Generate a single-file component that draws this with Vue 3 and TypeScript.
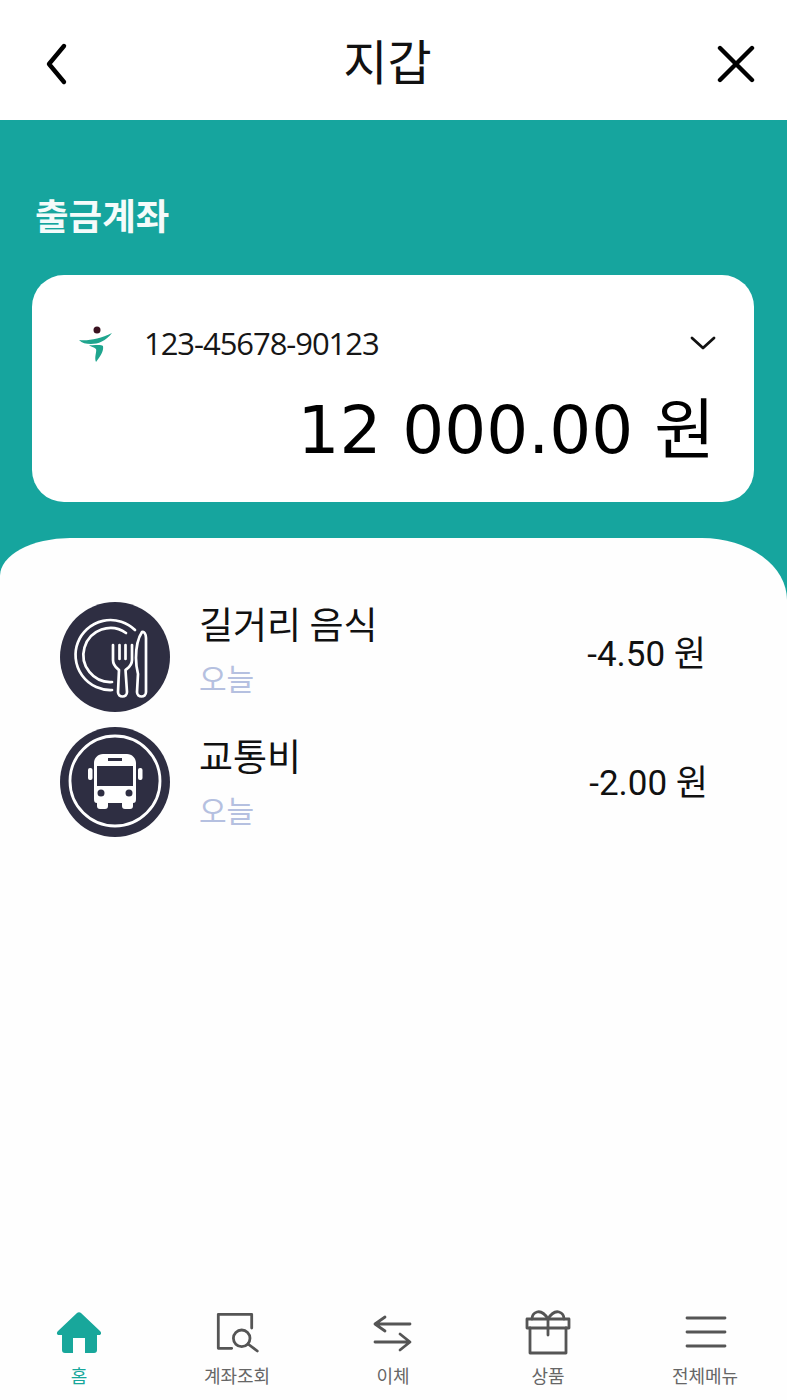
<script setup lang="ts">
interface Payment {
  name: string
  when: string
  amount: string
  icon: 'food' | 'bus'
  textTop: number
  amountTop: number
  amountRight: number
}

// text column drifts a few px from the icons in the design, so it's per row
const payments: Payment[] = [
  { name: '길거리 음식', when: '오늘', amount: '-4.50 원', icon: 'food', textTop: -3, amountTop: -14, amountRight: -2 },
  { name: '교통비', when: '오늘', amount: '-2.00 원', icon: 'bus', textTop: 4, amountTop: -6, amountRight: -4 },
]

const tabs = [
  { key: 'home', label: '홈' },
  { key: 'search', label: '계좌조회' },
  { key: 'transfer', label: '이체' },
  { key: 'gift', label: '상품' },
  { key: 'menu', label: '전체메뉴' },
]
</script>

<template>
  <div class="wallet">
    <header class="topbar">
      <svg class="topbar__icon" width="28" height="44" viewBox="0 0 28 44" fill="none" stroke="#000" stroke-width="4.4" stroke-linecap="round" stroke-linejoin="round">
        <path d="M22 4 L7 22 L22 40" />
      </svg>
      <h1 class="topbar__title">지갑</h1>
      <svg class="topbar__icon" width="38" height="38" viewBox="0 0 38 38" fill="none" stroke="#000" stroke-width="4.4" stroke-linecap="round">
        <path d="M3 3 L35 35 M35 3 L3 35" />
      </svg>
    </header>

    <section class="account">
      <h2 class="account__label">출금계좌</h2>
      <div class="card">
        <div class="card__row">
          <svg class="card__logo" width="36" height="40" viewBox="0 0 36 40">
            <circle cx="21" cy="7" r="3.500" fill="#3a1220" />
            <path d="M3 17 C12 18 24 16 36 10 C30 18 22 21 15 21 C10 21 6 20 3 17 Z" fill="#1fa58e" />
            <path d="M13 22 C18 23 24 21 27 23 C28 28 24 34 20 39 C18 34 21 29 20 26 C18 24 15 24 13 22 Z" fill="#1fa58e" />
          </svg>
          <span class="card__number">123-45678-90123</span>
          <svg class="card__chevron" width="26" height="16" viewBox="0 0 26 16" fill="none" stroke="#111" stroke-width="2.800" stroke-linecap="round" stroke-linejoin="round">
            <path d="M2 3 L13 13 L24 3" />
          </svg>
        </div>
        <div class="card__balance">12 000.00 원</div>
      </div>
    </section>

    <main class="sheet">
      <div v-for="p in payments" :key="p.name" class="payment">
        <svg v-if="p.icon === 'food'" class="payment__icon" width="110" height="110" viewBox="0 0 110 110">
          <circle cx="55" cy="55" r="55" fill="#2e2e42" />
          <g fill="none" stroke="#fff" stroke-width="2.700" stroke-linecap="round" stroke-linejoin="round">
            <path d="M75 28 A 35 35 0 1 0 52 88" />
            <path d="M66 31 A 27 27 0 1 0 52 80" />
            <path d="M53 43 V58 C53 64 57 66 59 68 L58 90 C58 96 67 96 67 90 L65.500 68 C68 66 72 64 72 58 V43 M59.500 43 V57 M65.500 43 V57" />
            <path d="M82 30 C78 36 76 44 76 56 C76 64 77 68 78 72 L77 90 C77 96 86 96 86 90 V36 C86 32 84 29 82 30 Z" />
          </g>
        </svg>
        <svg v-else class="payment__icon" width="110" height="110" viewBox="0 0 110 110">
          <circle cx="55" cy="55" r="55" fill="#2e2e42" />
          <circle cx="55" cy="54" r="45" fill="none" stroke="#fff" stroke-width="2.800" />
          <path fill="#fff" fill-rule="evenodd" d="M43 27 H67 C72 27 76 31 76 36 V72 C76 75 75 76 73 76 V79 C73 81 72 82 70 82 H65 C63 82 62 81 62 79 V76 H48 V79 C48 81 47 82 45 82 H40 C38 82 37 81 37 79 V76 C35 76 34 75 34 72 V36 C34 31 38 27 43 27 Z M37 39 V59 H73 V39 Z M48 31 V34 H62 V31 Z M37.500 66 A 3.500 3.500 0 1 0 44.500 66 A 3.500 3.500 0 1 0 37.500 66 Z M65.500 66 A 3.500 3.500 0 1 0 72.500 66 A 3.500 3.500 0 1 0 65.500 66 Z" />
          <rect x="28" y="41" width="4.500" height="12" rx="2" fill="#fff" />
          <rect x="78" y="41" width="4.500" height="12" rx="2" fill="#fff" />
        </svg>
        <div class="payment__text" :style="{ marginTop: `${p.textTop}px` }">
          <div class="payment__name">{{ p.name }}</div>
          <div class="payment__when">{{ p.when }}</div>
        </div>
        <div class="payment__amount" :style="{ marginTop: `${p.amountTop}px`, marginRight: `${p.amountRight}px` }">{{ p.amount }}</div>
      </div>
    </main>

    <nav class="tabs">
      <div v-for="t in tabs" :key="t.key" class="tab" :class="{ 'tab--active': t.key === 'home' }">
        <svg class="tab__icon" width="48" height="48" viewBox="0 0 48 48" fill="none" stroke="#555" stroke-width="2.800" stroke-linecap="round" stroke-linejoin="round">
          <path v-if="t.key === 'home'" fill="#18a79b" stroke="none" d="M22 3 C23 2 25 2 26 3 L45 21 C47 23 46 25 44 25 H42 V40 C42 42 41 43 39 43 H30 V28 H18 V43 H10 C8 43 7 42 7 40 V25 H4 C2 25 1 23 3 21 Z" />
          <template v-else-if="t.key === 'search'">
            <path d="M38.700 18 V4.300 H5.300 V38.300 H18.700" />
            <circle cx="28.700" cy="28.300" r="8.300" />
            <path d="M35 34 L44.300 41" />
          </template>
          <template v-else-if="t.key === 'transfer'">
            <path d="M41 14 H6 L16 7 M6 14 L16 21" />
            <path d="M6 32 H41 L31 24 M41 32 L31 40" />
          </template>
          <template v-else-if="t.key === 'gift'">
            <path d="M6 18 V43 H42 V18" />
            <path d="M3 9 H45 V18 H3 Z" />
            <path d="M24 9 V25 M24 9 C21 4 17 1 13 2 C10 3 8 6 8 9 M24 9 C27 4 31 1 35 2 C38 3 40 6 40 9" />
          </template>
          <path v-else d="M6 8 H44 M6 22 H44 M6 36 H44" />
        </svg>
        <span class="tab__label">{{ t.label }}</span>
      </div>
    </nav>
  </div>
</template>

<style>
body {
  background: #fff;
}
</style>

<style scoped>
.wallet {
  display: flex;
  flex-direction: column;
  width: 787px;
  height: 1400px;
  overflow: hidden;
  background: #fefefe;
  font-family: Roboto, 'Noto Sans CJK KR', sans-serif;
  color: #111;
}
.topbar {
  display: flex;
  align-items: center;
  justify-content: space-between;
  height: 120px;
  padding: 0 32px 0 42px;
  box-sizing: border-box;
  background: #fff;
}
.topbar__title {
  margin: 0 12px 2px 0;
  font-family: 'Noto Sans CJK KR', sans-serif;
  font-size: 48px;
  font-weight: 400;
  line-height: 1;
}
.topbar__icon {
  flex: none;
  margin-top: 8px;
}
.account {
  height: 480px;
  padding: 70px 33px 0 32px;
  box-sizing: border-box;
  background: #16a59e;
}
.account__label {
  margin: 0 0 35px 3px;
  height: 50px;
  font-family: 'Noto Sans CJK KR', sans-serif;
  font-size: 36.5px;
  font-weight: 700;
  line-height: 50px;
  color: #f4fbfa;
}
.card {
  height: 227px;
  padding: 40px 41px 0 44px;
  box-sizing: border-box;
  border-radius: 32px;
  background: #fff;
}
.card__row {
  display: flex;
  align-items: center;
  height: 56px;
}
.card__number {
  margin-left: 32px;
  font-family: 'Open Sans', sans-serif;
  font-size: 31px;
  letter-spacing: -1.05px;
  color: #161616;
}
.card__chevron {
  margin-left: auto;
  margin-right: -3px;
}
.card__balance {
  margin: 20px -2px 0 0;
  text-align: right;
  font-family: 'DejaVu Sans', 'Noto Sans CJK KR', sans-serif;
  font-size: 66px;
  line-height: 80px;
  color: #000;
}
.sheet {
  flex: 1;
  margin-top: -62px;
  padding: 64px 83px 0 60px;
  border-radius: 70px 85px 0 0 / 38px 62px 0 0;
  background: #fefefe;
}
.payment {
  display: flex;
  align-items: center;
  height: 110px;
  margin-bottom: 15px;
}
.payment__icon {
  flex: none;
}
.payment__text {
  align-self: flex-start;
  margin-left: 29px;
  flex: 1;
}
.payment__name {
  font-family: 'Noto Sans CJK KR', sans-serif;
  font-size: 37px;
  line-height: 48px;
  margin-bottom: 10px;
}
.payment__when {
  font-family: 'Noto Sans CJK KR', sans-serif;
  font-size: 30px;
  line-height: 40px;
  color: #b5c0e0;
}
.payment__amount {
  font-size: 35px;
  color: #111;
}
.tabs {
  display: grid;
  grid-template-columns: 158px 158px 154px 156px 158px;
  height: 110px;
  padding-top: 20px;
  box-sizing: border-box;
  background: #fefefe;
}
.tab {
  display: flex;
  flex-direction: column;
  align-items: center;
}
.tab__label {
  margin-top: 2px;
  font-family: 'Noto Sans CJK KR', sans-serif;
  font-size: 18px;
  line-height: 30px;
  color: #666;
}
.tab--active .tab__label {
  color: #18a79b;
}
</style>
